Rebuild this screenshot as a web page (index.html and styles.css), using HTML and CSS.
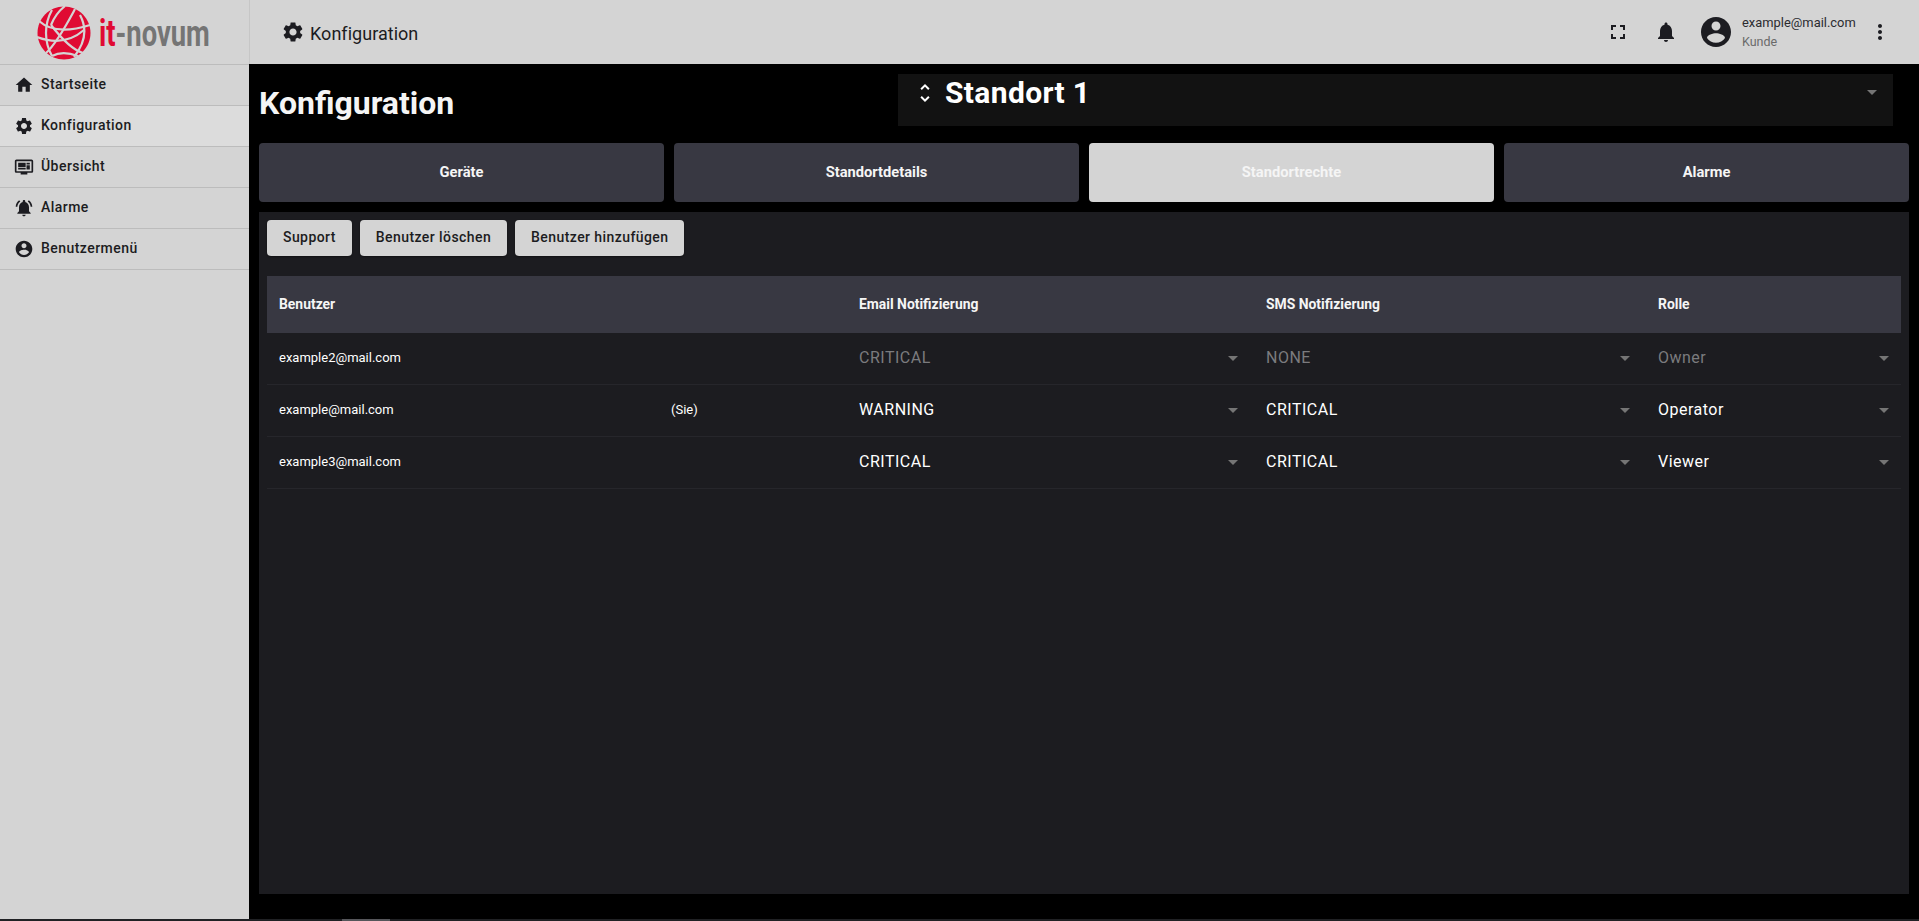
FILE: index.html
```html
<!DOCTYPE html>
<html lang="de">
<head>
<meta charset="utf-8">
<title>Konfiguration</title>
<link rel="stylesheet" href="styles.css">
</head>
<body>
<svg class="defs" width="0" height="0" aria-hidden="true">
  <symbol id="i-home" viewBox="0 0 24 24"><path d="M10 20v-6h4v6h5v-8h3L12 3 2 12h3v8z"/></symbol>
  <symbol id="i-gear" viewBox="0 0 24 24"><path d="M19.14 12.94c.04-.3.06-.61.06-.94 0-.32-.02-.64-.07-.94l2.03-1.58c.18-.14.23-.41.12-.61l-1.92-3.32c-.12-.22-.37-.29-.59-.22l-2.39.96c-.5-.38-1.03-.7-1.62-.94l-.36-2.54c-.04-.24-.24-.41-.48-.41h-3.84c-.24 0-.43.17-.47.41l-.36 2.54c-.59.24-1.13.57-1.62.94l-2.39-.96c-.22-.08-.47 0-.59.22L2.74 8.87c-.12.21-.08.47.12.61l2.03 1.58c-.05.3-.09.63-.09.94s.02.64.07.94l-2.03 1.58c-.18.14-.23.41-.12.61l1.92 3.32c.12.22.37.29.59.22l2.39-.96c.5.38 1.03.7 1.62.94l.36 2.54c.05.24.24.41.48.41h3.84c.24 0 .44-.17.47-.41l.36-2.54c.59-.24 1.13-.56 1.62-.94l2.39.96c.22.08.47 0 .59-.22l1.92-3.32c.12-.22.07-.47-.12-.61l-2.01-1.58zM12 15.6c-1.98 0-3.6-1.62-3.6-3.6s1.62-3.6 3.6-3.6 3.6 1.62 3.6 3.6-1.62 3.6-3.6 3.6z"/></symbol>
  <symbol id="i-monitor" viewBox="0 0 24 24"><path d="M21 3H3c-1.1 0-2 .9-2 2v12c0 1.1.9 2 2 2h5v2h8v-2h5c1.1 0 2-.9 2-2V5c0-1.1-.9-2-2-2zm0 14H3V5h18v12zM5 7h9v5H5zM15 7h4v2h-4zM15 10h4v5h-4zM5 13h9v2H5z"/></symbol>
  <symbol id="i-alarm" viewBox="0 0 24 24"><path d="M7.58 4.08L6.15 2.65C3.75 4.48 2.17 7.3 2.03 10.5h2c.15-2.65 1.51-4.97 3.55-6.42zm12.39 6.42h2c-.15-3.2-1.73-6.02-4.12-7.85l-1.42 1.43c2.02 1.45 3.39 3.77 3.54 6.42zM18 11c0-3.07-1.64-5.64-4.5-6.32V4c0-.83-.67-1.5-1.5-1.5s-1.5.67-1.5 1.5v.68C7.63 5.36 6 7.92 6 11v5l-2 2v1h16v-1l-2-2v-5zm-6 11c.14 0 .27-.01.4-.04.65-.14 1.18-.58 1.44-1.18.1-.24.15-.5.15-.78h-4c.01 1.1.9 2 2.01 2z"/></symbol>
  <symbol id="i-user" viewBox="0 0 24 24"><path d="M12 2C6.48 2 2 6.48 2 12s4.48 10 10 10 10-4.48 10-10S17.52 2 12 2zm0 3c1.66 0 3 1.34 3 3s-1.34 3-3 3-3-1.34-3-3 1.34-3 3-3zm0 14.2c-2.5 0-4.71-1.28-6-3.22.03-1.99 4-3.08 6-3.08 1.99 0 5.97 1.09 6 3.08-1.29 1.94-3.5 3.22-6 3.22z"/></symbol>
  <symbol id="i-bell" viewBox="0 0 24 24"><path d="M12 22c1.1 0 2-.9 2-2h-4c0 1.1.89 2 2 2zm6-6v-5c0-3.07-1.64-5.64-4.5-6.32V4c0-.83-.67-1.5-1.5-1.5s-1.5.67-1.5 1.5v.68C7.63 5.36 6 7.92 6 11v5l-2 2v1h16v-1l-2-2z"/></symbol>
  <symbol id="i-more" viewBox="0 0 24 24"><path d="M12 8c1.1 0 2-.9 2-2s-.9-2-2-2-2 .9-2 2 .9 2 2 2zm0 2c-1.1 0-2 .9-2 2s.9 2 2 2 2-.9 2-2-.9-2-2-2zm0 6c-1.1 0-2 .9-2 2s.9 2 2 2 2-.9 2-2-.9-2-2-2z"/></symbol>
  <symbol id="i-full" viewBox="0 0 24 24"><path d="M7 14H5v5h5v-2H7v-3zm-2-4h2V7h3V5H5v5zm12 7h-3v2h5v-5h-2v3zM14 5v2h3v3h2V5h-5z"/></symbol>
  <symbol id="i-unfold" viewBox="0 0 24 24"><path d="M12 5.83L15.17 9l1.41-1.41L12 3 7.41 7.59 8.83 9 12 5.83zm0 12.34L8.83 15l-1.41 1.41L12 21l4.59-4.59L15.17 15 12 18.17z"/></symbol>
  <symbol id="i-drop" viewBox="0 0 24 24"><path d="M7 10l5 5 5-5z"/></symbol>
</svg>

<div class="app">
  <aside class="sidebar">
    <div class="logo">
      <svg class="globe" viewBox="0 0 54 54" aria-hidden="true">
        <path fill="#e00a33" d="M27 .5C41.6.5 53.5 12.4 53.5 27S41.6 53.5 27 53.5.5 41.6.5 27 12.4.5 27 .5z"/>
        <g fill="none" stroke="#d4d4d4" stroke-width="2.2">
          <path d="M2 15C12 24 28 27 53 19"/>
          <path d="M15 4C7 18 7 36 15 50"/>
          <path d="M38 3C31 16 20 37 9 47"/>
          <path d="M14 19C24 32 36 44 46 47"/>
          <path d="M0 31C16 37 32 37 47 24"/>
          <path d="M43 9C50 22 49 36 37 51"/>
          <path d="M28 0C23 4 18 9 14 19"/>
          <path d="M15 50C24 45 33 47 41 50"/>
        </g>
      </svg>
      <span class="wordmark"><span class="wm-red">it</span><span class="wm-grey">-novum</span></span>
    </div>
    <nav class="nav">
      <a class="nav-item"><svg class="nav-icon"><use href="#i-home"/></svg>Startseite</a>
      <a class="nav-item is-active"><svg class="nav-icon"><use href="#i-gear"/></svg>Konfiguration</a>
      <a class="nav-item"><svg class="nav-icon"><use href="#i-monitor"/></svg>Übersicht</a>
      <a class="nav-item"><svg class="nav-icon"><use href="#i-alarm"/></svg>Alarme</a>
      <a class="nav-item"><svg class="nav-icon"><use href="#i-user"/></svg>Benutzermenü</a>
    </nav>
  </aside>

  <div class="body-col">
    <header class="topbar">
      <svg class="top-gear"><use href="#i-gear"/></svg>
      <span class="top-title">Konfiguration</span>
      <div class="top-actions">
        <svg class="ta-full"><use href="#i-full"/></svg>
        <svg class="ta-bell"><use href="#i-bell"/></svg>
        <svg class="ta-user"><use href="#i-user"/></svg>
        <div class="ta-who">
          <div class="ta-mail">example@mail.com</div>
          <div class="ta-role">Kunde</div>
        </div>
        <svg class="ta-more"><use href="#i-more"/></svg>
      </div>
    </header>

    <main class="main">
      <div class="head-row">
        <h1 class="page-title">Konfiguration</h1>
        <div class="site-select">
          <svg class="site-unfold"><use href="#i-unfold"/></svg>
          <span class="site-name">Standort 1</span>
          <svg class="site-drop"><use href="#i-drop"/></svg>
        </div>
      </div>

      <div class="tabs">
        <div class="tab">Geräte</div>
        <div class="tab">Standortdetails</div>
        <div class="tab is-active">Standortrechte</div>
        <div class="tab">Alarme</div>
      </div>

      <section class="panel">
        <div class="actions">
          <button class="btn">Support</button>
          <button class="btn">Benutzer löschen</button>
          <button class="btn">Benutzer hinzufügen</button>
        </div>

        <div class="table">
          <div class="row row-head">
            <div class="cell">Benutzer</div>
            <div class="cell"></div>
            <div class="cell">Email Notifizierung</div>
            <div class="cell">SMS Notifizierung</div>
            <div class="cell">Rolle</div>
          </div>

          <div class="row">
            <div class="cell">example2@mail.com</div>
            <div class="cell"></div>
            <div class="cell sel is-disabled"><span>CRITICAL</span><svg class="drop"><use href="#i-drop"/></svg></div>
            <div class="cell sel is-disabled"><span>NONE</span><svg class="drop"><use href="#i-drop"/></svg></div>
            <div class="cell sel is-disabled"><span>Owner</span><svg class="drop"><use href="#i-drop"/></svg></div>
          </div>

          <div class="row">
            <div class="cell">example@mail.com</div>
            <div class="cell">(Sie)</div>
            <div class="cell sel"><span>WARNING</span><svg class="drop"><use href="#i-drop"/></svg></div>
            <div class="cell sel"><span>CRITICAL</span><svg class="drop"><use href="#i-drop"/></svg></div>
            <div class="cell sel"><span>Operator</span><svg class="drop"><use href="#i-drop"/></svg></div>
          </div>

          <div class="row">
            <div class="cell">example3@mail.com</div>
            <div class="cell"></div>
            <div class="cell sel"><span>CRITICAL</span><svg class="drop"><use href="#i-drop"/></svg></div>
            <div class="cell sel"><span>CRITICAL</span><svg class="drop"><use href="#i-drop"/></svg></div>
            <div class="cell sel"><span>Viewer</span><svg class="drop"><use href="#i-drop"/></svg></div>
          </div>
        </div>
      </section>
    </main>
  </div>
</div>
<div class="scrollstrip"><div class="scrollthumb"></div></div>
</body>
</html>
```
FILE: styles.css
```css
* { box-sizing: border-box; }
html, body { height: 100%; }
body {
  margin: 0;
  display: flex;
  flex-direction: column;
  overflow: hidden;
  background: #000;
  font-family: Roboto, "Liberation Sans", sans-serif;
  color: #1c1c21;
}
.defs { position: absolute; }
svg { display: block; fill: currentColor; flex: none; }

.app { flex: 1; display: flex; min-height: 0; }
.scrollstrip { height: 2px; background: #202124; padding-left: 342px; }
.scrollthumb { width: 48px; height: 2px; background: #55565a; }

/* Sidebar */
.sidebar { width: 249px; flex: none; background: #d4d4d4; box-shadow: 1px 0 1px rgba(0,0,0,.08); }
.logo {
  height: 65px;
  display: flex;
  align-items: center;
  padding-left: 37px;
  border-bottom: 1px solid #bcbcbc;
  overflow: hidden;
}
.globe { width: 54px; height: 54px; margin-top: 2px; }
.wordmark {
  margin-left: 8px;
  margin-top: 3px;
  font-size: 37px;
  font-weight: 700;
  line-height: 1;
  display: flex;
  white-space: nowrap;
  transform: scaleX(.74);
  transform-origin: left center;
}
.wm-red { color: #e00a33; }
.wm-grey { color: #757575; }
.nav { display: flex; flex-direction: column; }
.nav-item {
  height: 41px;
  display: flex;
  align-items: center;
  padding: 0 0 2px 14px;
  border-bottom: 1px solid #bcbcbc;
  font-size: 14px;
  font-weight: 500;
  letter-spacing: .45px;
  color: #1c1c21;
}
.nav-item.is-active { background: #dcdcdc; }
.nav-icon { width: 20px; height: 20px; margin: 2px 7px 0 0; }

/* Top bar */
.body-col { flex: 1; min-width: 0; display: flex; flex-direction: column; }
.topbar {
  height: 64px;
  flex: none;
  background: #d4d4d4;
  display: flex;
  align-items: center;
  padding-left: 31px;
  padding-right: 27px;
  border-left: 1px solid #c6c6c6;
}
.top-gear { width: 24px; height: 24px; margin-right: 5px; }
.top-title { font-size: 18px; margin-top: 2px; letter-spacing: .03px; }
.top-actions { margin-left: auto; display: flex; align-items: center; }
.ta-full { width: 24px; height: 24px; margin-right: 24px; }
.ta-bell { width: 24px; height: 24px; margin-right: 20px; }
.ta-user { width: 36px; height: 36px; margin-right: 8px; }
.ta-who { width: 126px; }
.ta-mail { font-size: 12.9px; line-height: 18px; color: #2b2b30; }
.ta-role { font-size: 12.5px; line-height: 18px; color: #6a6a6a; margin-top: 1px; }
.ta-more { width: 24px; height: 24px; }

/* Main */
.main {
  flex: 1;
  min-height: 0;
  display: flex;
  flex-direction: column;
  padding: 10px 10px 25px;
  background: #000;
}
.head-row { display: flex; height: 52px; flex: none; margin-bottom: 17px; }
.page-title {
  flex: 1;
  margin: 9px 0 0;
  font-size: 32px;
  line-height: 40px;
  font-weight: 700;
  color: #f5f5f5;
}
.site-select {
  width: 995px;
  margin-right: 16px;
  background: #121212;
  display: flex;
  align-items: flex-start;
  padding: 0 9px 0 15px;
  color: #fff;
}
.site-unfold { width: 24px; height: 24px; margin-top: 7px; }
.site-name { margin: 1px 0 0 8px; font-size: 30px; font-weight: 700; line-height: 36px; letter-spacing: .35px; }
.site-drop { width: 24px; height: 24px; margin-left: auto; margin-top: 6px; color: #757575; }

.tabs { display: grid; grid-template-columns: repeat(4, 1fr); gap: 10px; flex: none; margin-bottom: 10px; }
.tab {
  height: 59px;
  padding-bottom: 2px;
  border-radius: 4px;
  background: #383842;
  color: #f5f5f5;
  display: flex;
  align-items: center;
  justify-content: center;
  font-size: 14.7px;
  font-weight: 700;
}
.tab.is-active { background: #d4d4d4; color: #f5f5f5; }

.panel { flex: 1; min-height: 0; background: #1c1c20; padding: 8px; }
.actions { display: flex; gap: 8px; margin-bottom: 20px; }
.btn {
  height: 36px;
  padding: 0 16px 2px;
  border: 0;
  border-radius: 4px;
  background: #d4d4d4;
  color: #1c1c21;
  font-family: inherit;
  font-size: 14px;
  font-weight: 500;
  letter-spacing: .42px;
  box-shadow: 0 1px 2px rgba(0,0,0,.4);
}

.row {
  display: grid;
  grid-template-columns: 392px 188px 407px 392px 255px;
  height: 52px;
  align-items: center;
  border-bottom: 1px solid #26262b;
  color: #fff;
  font-size: 13px;
}
.row-head { height: 57px; background: #383842; border-bottom: 0; font-size: 13.9px; font-weight: 700; color: #f5f5f5; }
.cell { padding: 0 12px 2px; min-width: 0; }
.sel { display: flex; align-items: center; justify-content: space-between; font-size: 16px; padding-right: 9px; letter-spacing: .5px; }
.sel:nth-child(4) { padding-right: 9px; }
.sel:nth-child(5) { padding-right: 5px; }
.sel.is-disabled { color: #7b7b7e; }
.drop { width: 24px; height: 24px; color: #757575; }
```
